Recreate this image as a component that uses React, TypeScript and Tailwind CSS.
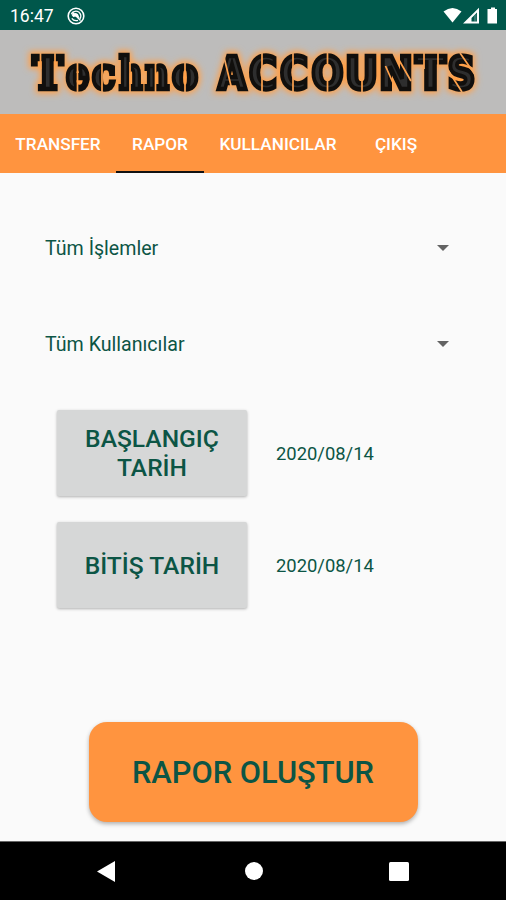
import { useState } from 'react';

const tabs = [
  { label: 'TRANSFER', width: 'w-[116px]' },
  { label: 'RAPOR', width: 'w-[88px]' },
  { label: 'KULLANICILAR', width: 'w-[148px]' },
  { label: 'ÇIKIŞ', width: 'w-[88px]' },
];

const dates = [
  { label: 'BAŞLANGIÇ TARİH', value: '2020/08/14' },
  { label: 'BİTİŞ TARİH', value: '2020/08/14' },
];

// x and width of every letter, the logo has uneven spacing
const techno: [string, number, number][] = [
  ['T', 32.5, 30.5], ['e', 66, 23.5], ['c', 92, 23.5], ['h', 119, 23.5], ['n', 145, 24], ['o', 172, 26],
];
const accounts: [string, number, number][] = [
  ['A', 218, 28], ['C', 249, 28], ['C', 280, 28], ['O', 311.5, 32],
  ['U', 345, 33], ['N', 379, 34], ['T', 415.5, 30], ['S', 447.5, 28],
];

function StatusBar() {
  return (
    <div className="h-[30px] shrink-0 bg-[#00574b] text-white flex items-center px-[10px]">
      <span className="text-[17.5px] leading-none pt-[3px]">16:47</span>
      <svg className="w-[18px] h-[18px] ml-[13px] mt-px" viewBox="0 0 18 18" fill="none" stroke="#fff">
        <circle cx="9" cy="9" r="7.8" strokeWidth="1.6" />
        <path d="M4.3 7Q7.5 2.6 11.8 5Q15.2 8 13 12M4.8 11.3Q7 14.4 11 13.3" strokeWidth="1.3" />
        <path d="M4.5 7.8Q8 4.6 11 7.2L12.8 11.5L8.8 9.4L6.2 10Z" fill="#fff" stroke="none" />
        <path d="M5 5L13.5 13.5" strokeWidth="1.2" />
      </svg>
      <svg className="w-[58px] h-[18px] ml-auto -mr-[5px] mt-px" viewBox="0 0 58 18" fill="#fff">
        <path d="M0.5 4.5Q9.5 -2.5 18.5 4.5L9.5 15.5Z" />
        <path fillRule="evenodd" d="M20 16.5L36 0.8V16.5ZM28.5 14.5H34V5.5L28.5 11Z" />
        <path d="M31 14.5V9L33.5 6.5V14.5Z" opacity=".2" />
        <path d="M46.5 2H48V0.5H52V2H54V16.5H44.5V2Z" />
      </svg>
    </div>
  );
}

function Logo() {
  return (
    <header className="h-[84px] shrink-0 bg-[#bdbcbb]">
      <svg className="w-full h-full" viewBox="0 30 506 84">
        <defs>
          <filter id="glow" x="-10%" y="-50%" width="120%" height="200%">
            <feGaussianBlur stdDeviation="3.2" />
          </filter>
          <g id="words" fontWeight="bold" fontSize="45">
            <g fontFamily="DejaVu Serif">
              {techno.map(([char, x, width]) => (
                <text key={x} x={x} y="88.5" textLength={width} lengthAdjust="spacingAndGlyphs">{char}</text>
              ))}
            </g>
            <g fontFamily="DejaVu Sans">
              {accounts.map(([char, x, width]) => (
                <text key={x} x={x} y="88.5" textLength={width} lengthAdjust="spacingAndGlyphs">{char}</text>
              ))}
            </g>
          </g>
          {/* Stencil cuts */}
          <mask id="stencil" maskUnits="userSpaceOnUse" x="0" y="30" width="506" height="84">
            <rect x="0" y="30" width="506" height="84" fill="#fff" />
            <path
              d="M40.5 53V69M55 53V69M77.5 62V92M102 62V92M130 62V92M155.5 62V92M185 62V92M223 53L232.5 92M262 53V92M293 53V92M327.5 53V92M362 53V92M385.5 66L397 92M395 53L411 81M424 53V69M438 53V69M448 70L462 92M460 53L476 76"
              fill="none"
              stroke="#000"
              strokeWidth="1.7"
            />
          </mask>
        </defs>
        <use href="#words" fill="#ffa04a" stroke="#ffa04a" strokeWidth="9" filter="url(#glow)" />
        <g mask="url(#stencil)">
          <use href="#words" fill="#2e2e2e" stroke="#110f0d" strokeWidth="4.5" />
        </g>
      </svg>
    </header>
  );
}

function Spinner({ text }: { text: string }) {
  return (
    <button className="h-[60px] flex items-center justify-between pl-[45px] pr-[57px] text-[19.6px]">
      <span className="pt-px">{text}</span>
      <svg className="w-3 h-1.5" viewBox="0 0 12 6">
        <path d="M0 0H12L6 6Z" fill="#636363" />
      </svg>
    </button>
  );
}

export default function App() {
  const [active, setActive] = useState('RAPOR');

  return (
    <div className="w-full h-[900px] flex flex-col bg-[#fafafa] font-[Roboto,sans-serif] text-[#0c5545] overflow-hidden">
      <StatusBar />
      <Logo />

      {/* Tabs */}
      <nav className="h-[59px] shrink-0 bg-[#ff943f] flex text-white text-[17.2px] font-medium">
        {tabs.map((tab) => (
          <button
            key={tab.label}
            onClick={() => setActive(tab.label)}
            className={`${tab.width} shrink-0 border-b-2 pt-1 ${active === tab.label ? 'border-[#111]' : 'border-transparent'}`}
          >
            {tab.label}
          </button>
        ))}
      </nav>

      <main className="flex-1 flex flex-col">
        {/* Filters */}
        <div className="flex flex-col gap-9 pt-[45px]">
          <Spinner text="Tüm İşlemler" />
          <Spinner text="Tüm Kullanıcılar" />
        </div>

        {/* Date range */}
        <div className="flex flex-col gap-[26px] pl-[57px] pt-9">
          {dates.map((date) => (
            <div key={date.label} className="flex items-center gap-[29px]">
              <button className="w-[190px] h-[86px] px-5 bg-[#d6d7d7] rounded-xs shadow-[0_1px_3px_rgba(0,0,0,0.3)] text-[24.6px] leading-[29px] font-medium">
                {date.label}
              </button>
              <span className="text-[18.4px] pt-px">{date.value}</span>
            </div>
          ))}
        </div>

        <button className="mt-[114px] mx-auto w-[329px] h-[100px] pt-[3px] rounded-[18px] bg-[#ff943f] shadow-[0_2px_4px_rgba(0,0,0,0.3)] text-[30.8px] font-medium">
          RAPOR OLUŞTUR
        </button>
      </main>

      {/* Navigation bar */}
      <footer className="h-[59px] shrink-0 bg-black border-t border-[#666] flex items-center justify-between px-[97px]">
        <svg className="w-[18px] h-[21px]" viewBox="0 0 18 21">
          <path d="M18 0V21L0 10.5Z" fill="#fff" />
        </svg>
        <div className="w-[18px] h-[18px] ml-[3px] rounded-full bg-white" />
        <div className="w-5 h-[19px] rounded-[1.5px] bg-white" />
      </footer>
    </div>
  );
}
